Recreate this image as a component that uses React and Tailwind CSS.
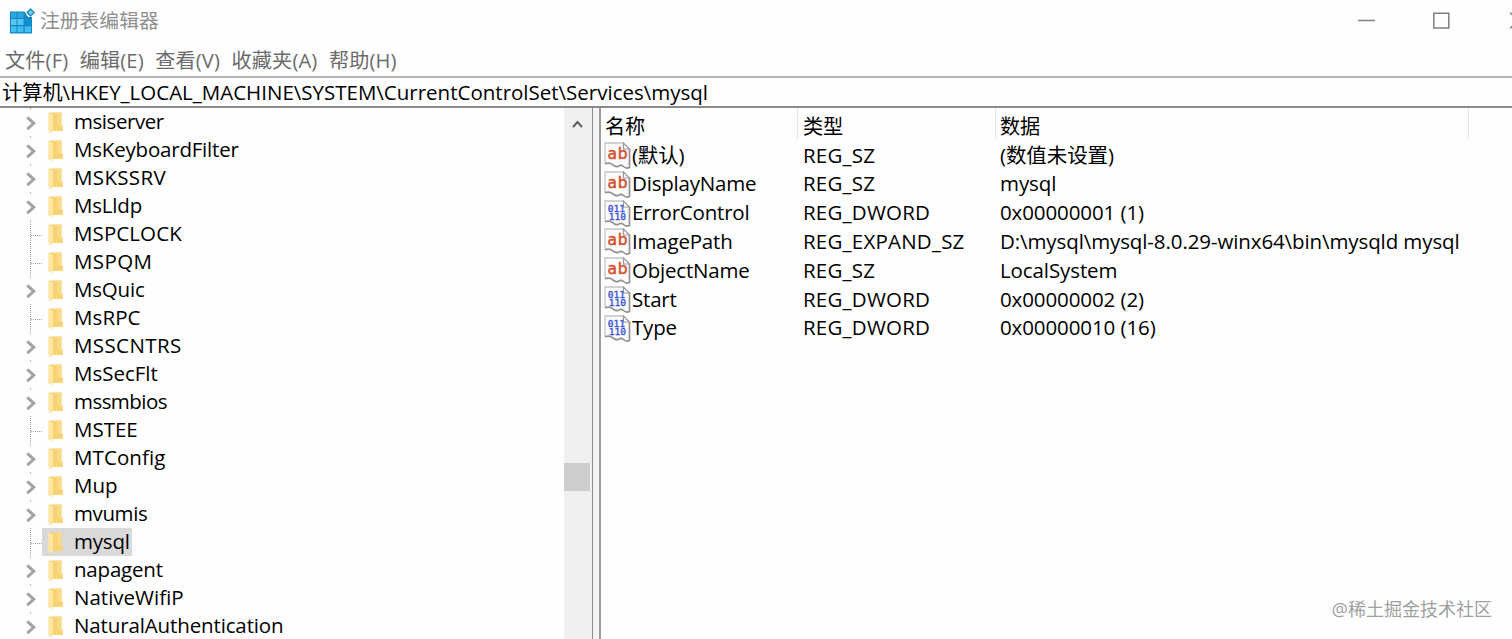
import { clsx } from "clsx";

const menus = ["文件(F)", "编辑(E)", "查看(V)", "收藏夹(A)", "帮助(H)"];

const keys = [
  { name: "msiserver", expandable: true, spacing: "tracking-[-0.45px]" },
  { name: "MsKeyboardFilter", expandable: true },
  { name: "MSKSSRV", expandable: true, spacing: "tracking-[0.35px]" },
  { name: "MsLldp", expandable: true },
  { name: "MSPCLOCK", spacing: "tracking-[0.1px]" },
  { name: "MSPQM", spacing: "tracking-[0.4px]" },
  { name: "MsQuic", expandable: true },
  { name: "MsRPC", spacing: "tracking-[0.1px]" },
  { name: "MSSCNTRS", expandable: true, spacing: "tracking-[0.4px]" },
  { name: "MsSecFlt", expandable: true, spacing: "tracking-[0px]" },
  { name: "mssmbios", expandable: true, spacing: "tracking-[-0.55px]" },
  { name: "MSTEE", spacing: "tracking-[0px]" },
  { name: "MTConfig", expandable: true, spacing: "tracking-[0.1px]" },
  { name: "Mup", expandable: true, spacing: "tracking-[0px]" },
  { name: "mvumis", expandable: true, spacing: "tracking-[-0.4px]" },
  { name: "mysql", selected: true },
  { name: "napagent", expandable: true },
  { name: "NativeWifiP", expandable: true, spacing: "tracking-[0px]" },
  { name: "NaturalAuthentication", expandable: true, spacing: "tracking-[-0.13px]" },
];

const values = [
  { name: "(默认)", type: "REG_SZ", data: "(数值未设置)" },
  { name: "DisplayName", type: "REG_SZ", data: "mysql" },
  { name: "ErrorControl", type: "REG_DWORD", data: "0x00000001 (1)" },
  {
    name: "ImagePath",
    type: "REG_EXPAND_SZ",
    data: "D:\\mysql\\mysql-8.0.29-winx64\\bin\\mysqld mysql",
  },
  { name: "ObjectName", type: "REG_SZ", data: "LocalSystem" },
  { name: "Start", type: "REG_DWORD", data: "0x00000002 (2)" },
  { name: "Type", type: "REG_DWORD", data: "0x00000010 (16)" },
];

function RegeditIcon() {
  return (
    <svg width="27" height="27" viewBox="0 0 27 27" className="relative -top-px shrink-0">
      <path d="M1 4.500h14.500L19 10h4v16.500H1z" fill="#1487c0" />
      <path d="M2 5.500h5.500v5.300H2zM8.500 5.500h6v5.300h-6z" fill="#2ba9df" />
      <path d="M2 12h5.500v6H2zM8.500 12h6v6h-6z" fill="#54c6f0" />
      <path d="M15.700 12h6.300v6h-6.300z" fill="#0e90cf" />
      <path d="M2 19.200h5.500v6H2zM8.500 19.200h6v6h-6zM15.700 19.200h6.300v6h-6.300z" fill="#3dbdf0" />
      <path d="M21.500 1l4.500 4.500-4.500 4.500L17 5.500z" fill="#2b8fc4" />
      <path d="M21.500 3.200l2.300 2.300-2.300 2.300-2.300-2.300z" fill="#7fcdf0" />
    </svg>
  );
}

function FolderIcon() {
  return (
    <svg width="16" height="22" viewBox="0 0 16 22" className="relative top-px shrink-0">
      <path d="M1 0.500h12.500v13h1.300v5.500H4L1 18z" fill="#f7d373" />
      <path d="M9.500 0.500h4v13h-4z" fill="#f9dc8a" />
      <path d="M0.300 0.500l4.700 2.500v15.500l-1.200 3-3.500-2.500z" fill="#ffe6a3" />
    </svg>
  );
}

function ValueIcon({ kind }) {
  return (
    <svg width="27" height="27" viewBox="0 0 27 27" className="shrink-0">
      <path
        d="M1 1h18.500l6 6v18.500c-2 .8-4.500.5-6-1s-3-1.500-5-.3-4 .3-6-1.500-4-2.200-7.500-1z"
        fill="#fbfbfb"
      />
      <path d="M1 21.500V1h18.500" fill="none" stroke="#c4c4c4" strokeWidth="1.300" />
      <path d="M19.500 1v6h6z" fill="#fff" stroke="#9a9a9a" strokeWidth="1.200" />
      <path
        d="M25.500 7v18.500c-2 .8-4.500.5-6-1s-3-1.500-5-.3-4 .3-6-1.500-4-2.200-7.500-1"
        fill="none"
        stroke="#929292"
        strokeWidth="1.700"
      />
      {kind === "sz" ? (
        <text
          x="3.500"
          y="17"
          textLength="20"
          fontSize="15.500"
          fill="#d5502f"
          stroke="#d5502f"
          strokeWidth="0.500"
          className="font-['DejaVu_Sans',sans-serif]"
        >
          ab
        </text>
      ) : (
        <g
          fontSize="9"
          fill="#3b55d8"
          stroke="#3b55d8"
          strokeWidth="0.350"
          className="font-['DejaVu_Sans_Mono',monospace] tracking-normal"
        >
          <text x="3.700" y="11.500" textLength="17.300" lengthAdjust="spacingAndGlyphs">
            011
          </text>
          <text x="4.700" y="20" textLength="17.300" lengthAdjust="spacingAndGlyphs">
            110
          </text>
        </g>
      )}
    </svg>
  );
}

function Branch({ expandable }) {
  return (
    <svg width="42" height="28" viewBox="0 0 42 28" className="shrink-0">
      {expandable ? (
        <>
          <path d="M30.500 0v1.500" stroke="#a8a8a8" />
          <path
            d="M27.300 9.400l6.500 5.900-6.500 5.900"
            fill="none"
            stroke="#a3a3a3"
            strokeWidth="3"
          />
        </>
      ) : (
        <path
          d="M30.500 0v28M31 15.500h11"
          stroke="#a0a0a0"
          strokeDasharray="1 1"
        />
      )}
    </svg>
  );
}

function TreeRow({ item }) {
  return (
    <div className="flex h-7 shrink-0">
      <Branch expandable={item.expandable} />
      <div
        className={clsx(
          "flex h-7 items-center pl-[6px] pr-[2px]",
          item.selected && "bg-[#d9d9d9]"
        )}
      >
        <FolderIcon />
        <span className={clsx("ml-[10px] pb-px leading-[27px]", item.spacing)}>
          {item.name}
        </span>
      </div>
    </div>
  );
}

function ScrollBar() {
  return (
    <div className="flex w-7 shrink-0 flex-col bg-[#f0f0f0]">
      <svg width="27" height="32" viewBox="0 0 27 32">
        <path
          d="M9 19l4.500-5 4.500 5"
          fill="none"
          stroke="#5c5c5c"
          strokeWidth="1.900"
        />
      </svg>
      <div className="mt-[323px] h-7 w-[26px] bg-[#cdcdcd]" />
    </div>
  );
}

export default function App() {
  return (
    <div className="relative flex h-[639px] w-[1512px] flex-col overflow-hidden bg-[#fefefe] font-['Open_Sans','Noto_Sans_CJK_SC',sans-serif] text-[20.500px] tracking-[-0.2px] whitespace-pre text-black">
      <header className="flex h-[42px] shrink-0 items-center justify-between">
        <div className="flex items-center pl-[9px]">
          <RegeditIcon />
          <span className="ml-1 text-[19.800px] tracking-normal text-[#8f8f8f]">
            注册表编辑器
          </span>
        </div>
        <svg width="160" height="42" viewBox="0 0 160 42" fill="none" stroke="#808080">
          <path d="M6 20.500h17" strokeWidth="1.500" />
          <path d="M81.800 13.300h15v14.700h-15z" strokeWidth="1.500" />
          <path d="M158 12.500l16 16M158 28.500l16-16" strokeWidth="1.500" />
        </svg>
      </header>

      <nav className="flex h-[34px] shrink-0 items-center gap-[11.500px] pt-[2px] pl-[5px] text-[20.200px] leading-[34px] tracking-[0.1px] text-[#6b6b6b]">
        {menus.map((menu) => (
          <span key={menu}>{menu}</span>
        ))}
      </nav>

      <div className="flex h-8 shrink-0 items-center border-y-2 border-t-[#b4b4b4] border-b-[#8a8a8a] pl-[2px]">
        <span className="text-[20.200px] tracking-normal">计算机</span>
        <span className="tracking-[0px]">
          \HKEY_LOCAL_MACHINE\SYSTEM\CurrentControlSet\Services\mysql
        </span>
      </div>

      <main className="flex min-h-0 flex-1">
        <section className="flex w-[564px] shrink-0 flex-col overflow-hidden">
          {keys.map((item) => (
            <TreeRow key={item.name} item={item} />
          ))}
        </section>
        <ScrollBar />
        <div className="w-[9px] shrink-0 border-r-2 border-l border-r-[#9b9b9b] border-l-[#8c8c8c] bg-[#f4f4f4]" />

        <section className="min-w-0 flex-1">
          <div className="flex h-[33px] text-[20.200px] leading-[37px]">
            <div className="mb-[2px] w-[197px] border-r border-[#e5e5e5] pl-1">名称</div>
            <div className="mb-[2px] w-[198px] border-r border-[#e5e5e5] pl-[5px]">类型</div>
            <div className="mb-[2px] w-[473px] border-r border-[#e5e5e5] pl-[4px]">数据</div>
          </div>
          {values.map((value) => (
            <div key={value.name} className="flex h-[28.800px] items-center">
              <div className="flex w-[202px] items-center pl-[3px]">
                <ValueIcon kind={value.type === "REG_DWORD" ? "dword" : "sz"} />
                <span className="ml-[1px] pb-px">{value.name}</span>
              </div>
              <span className="w-[197px] pb-px tracking-[0.22px]">{value.type}</span>
              <span className="pb-px tracking-[-0.1px]">{value.data}</span>
            </div>
          ))}
        </section>
      </main>

      <div className="absolute right-5 bottom-4 text-[18px] tracking-normal text-[#a0a0a0]">
        @稀土掘金技术社区
      </div>
    </div>
  );
}
